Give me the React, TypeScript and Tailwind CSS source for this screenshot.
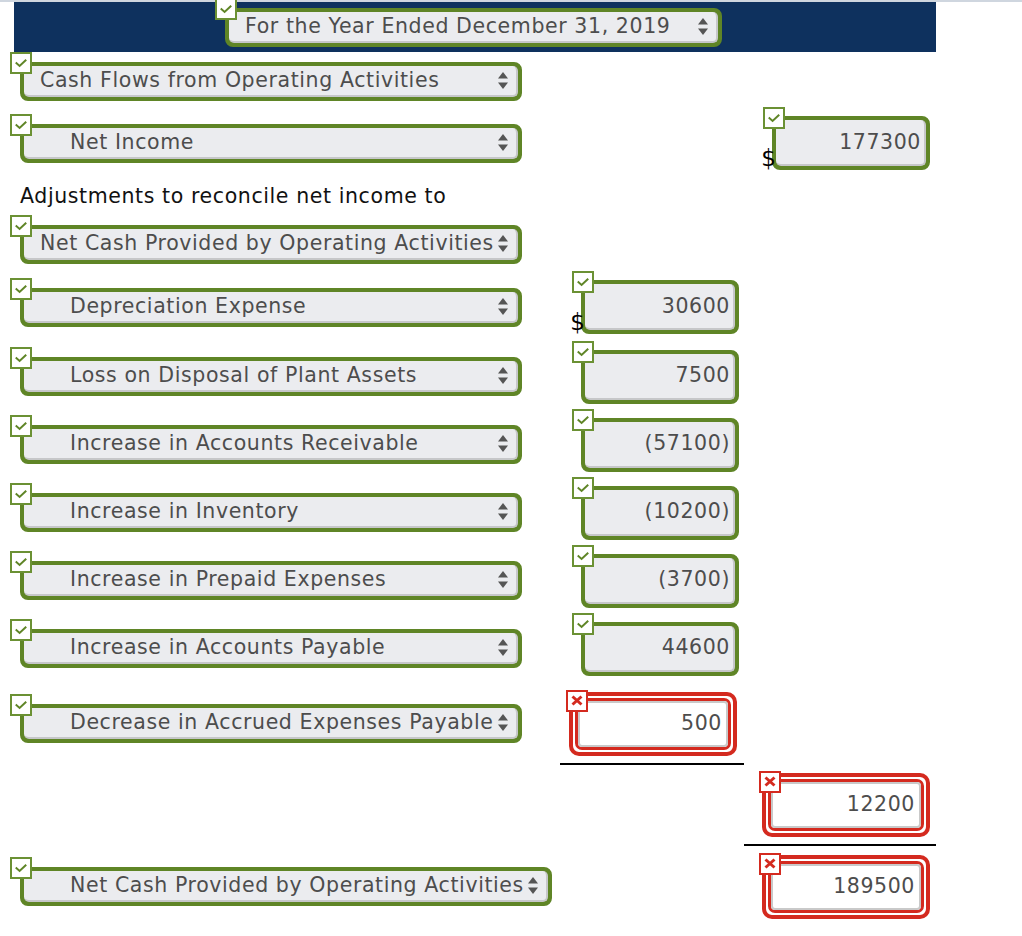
import React from "react";

function Check({ className = "-left-[14px] -top-[14px]" }: { className?: string }) {
  return (
    <div className={`absolute ${className} z-10 w-[22px] h-[22px] bg-white border-2 border-[#6b9134] flex items-start justify-center`}>
      <svg width="12" height="9" viewBox="0 0 12 9" className="mt-[5px]">
        <path d="M1.5 4.2 L4.6 7 L10.5 1.5" stroke="#5f8526" strokeWidth="2" fill="none" strokeLinecap="square" />
      </svg>
    </div>
  );
}

function Cross({ className = "-left-[7px] -top-[6px]" }: { className?: string }) {
  return (
    <div className={`absolute ${className} z-10 w-[22px] h-[22px] bg-white border-2 border-[#d42a1f] flex items-center justify-center`}>
      <svg width="12" height="11" viewBox="0 0 12 11">
        <path d="M1.5 1.5 L10.5 9.5 M10.5 1.5 L1.5 9.5" stroke="#d42a1f" strokeWidth="3" fill="none" />
      </svg>
    </div>
  );
}

function Arrows() {
  return (
    <svg width="10" height="17" viewBox="0 0 10 17" className="ml-auto shrink-0">
      <path d="M0 6.5 L5 0 L10 6.5 Z" fill="#555" />
      <path d="M0 10.5 L10 10.5 L5 17 Z" fill="#555" />
    </svg>
  );
}

function Select({ label, w, pl }: { label: string; w: string; pl: string }) {
  return (
    <div className={`relative ${w} h-[39px] rounded-[8px] border-4 border-[#5f8526] bg-[#5f8526]`}>
      <Check />
      <div className={`h-full rounded-[5px] bg-[#ebecef] border-r-2 border-b-2 border-[#c6c7c9] flex items-center ${pl} pr-[8px] text-[20.5px] tracking-[0.6px] text-[#4d4d4d] whitespace-nowrap`}>
        <span>{label}</span>
        <Arrows />
      </div>
    </div>
  );
}

function GreenBox({ value, dollar = false }: { value: string; dollar?: boolean }) {
  return (
    <div className="relative w-[158px] h-[54px] rounded-[8px] border-4 border-[#5f8526] bg-[#5f8526]">
      <Check className="-left-[13px] -top-[13px]" />
      {dollar && (
        <span className="absolute right-full bottom-[-4px] text-[23px] leading-none text-black">$</span>
      )}
      <div className="h-full rounded-[5px] bg-[#ebecef] border-r-2 border-b-2 border-[#c6c7c9] flex items-center justify-end pr-[3px] text-[20.5px] tracking-[0.6px] text-[#4d4d4d]">
        {value}
      </div>
    </div>
  );
}

function RedBox({ value }: { value: string }) {
  return (
    <div className="relative w-[168px] h-[64px] rounded-[10px] border-4 border-[#d42a1f] bg-white p-[2px]">
      <Cross />
      <div className="h-full rounded-[7px] border-[3px] border-[#d42a1f]">
        <div className="h-full rounded-[4px] border-2 border-[#c9c9c9] bg-white flex items-center justify-end pr-[4px] text-[20.5px] tracking-[0.6px] text-[#4d4d4d]">
          {value}
        </div>
      </div>
    </div>
  );
}

function Row({
  h,
  left,
  mid,
  right,
}: {
  h: string;
  left?: React.ReactNode;
  mid?: React.ReactNode;
  right?: React.ReactNode;
}) {
  return (
    <div className={`flex items-center ${h}`}>
      <div className="w-[560px] pl-[20px] flex items-center">{left}</div>
      <div className="w-[184px] flex items-center">{mid}</div>
      <div className="w-[192px] flex items-center">{right}</div>
    </div>
  );
}

export default function App() {
  return (
    <div className="w-[1022px] h-[936px] bg-white overflow-hidden font-['DejaVu_Sans',_'Verdana',_sans-serif]">
      <div className="h-[2px] bg-[#cfd6df]" />
      <div className="ml-[14px] w-[922px] h-[50px] bg-[#0e315e] pl-[211px] pt-[6px]">
        <Select label="For the Year Ended December 31, 2019" w="w-[497px]" pl="pl-[16px]" />
      </div>

      <Row h="h-[58px]" left={<Select label="Cash Flows from Operating Activities" w="w-[502px]" pl="pl-[16px]" />} />
      <Row
        h="h-[66px]"
        left={<Select label="Net Income" w="w-[502px]" pl="pl-[46px]" />}
        right={<div className="ml-[28px]"><GreenBox value="177300" dollar /></div>}
      />
      <div className="h-[40px] flex items-center pl-[20px] text-[20.5px] tracking-[0.6px] text-[#111]">
        Adjustments to reconcile net income to
      </div>
      <Row h="h-[57px]" left={<Select label="Net Cash Provided by Operating Activities" w="w-[502px]" pl="pl-[16px]" />} />
      <Row
        h="h-[68px]"
        left={<Select label="Depreciation Expense" w="w-[502px]" pl="pl-[46px]" />}
        mid={<div className="ml-[21px]"><GreenBox value="30600" dollar /></div>}
      />
      <Row
        h="h-[71px]"
        left={<Select label="Loss on Disposal of Plant Assets" w="w-[502px]" pl="pl-[46px]" />}
        mid={<div className="ml-[21px]"><GreenBox value="7500" /></div>}
      />
      <Row
        h="h-[65px]"
        left={<Select label="Increase in Accounts Receivable" w="w-[502px]" pl="pl-[46px]" />}
        mid={<div className="ml-[21px]"><GreenBox value="(57100)" /></div>}
      />
      <Row
        h="h-[71px]"
        left={<Select label="Increase in Inventory" w="w-[502px]" pl="pl-[46px]" />}
        mid={<div className="ml-[21px]"><GreenBox value="(10200)" /></div>}
      />
      <Row
        h="h-[65px]"
        left={<Select label="Increase in Prepaid Expenses" w="w-[502px]" pl="pl-[46px]" />}
        mid={<div className="ml-[21px]"><GreenBox value="(3700)" /></div>}
      />
      <Row
        h="h-[71px]"
        left={<Select label="Increase in Accounts Payable" w="w-[502px]" pl="pl-[46px]" />}
        mid={<div className="ml-[21px]"><GreenBox value="44600" /></div>}
      />
      <Row
        h="h-[79px]"
        left={<Select label="Decrease in Accrued Expenses Payable" w="w-[502px]" pl="pl-[46px]" />}
        mid={<div className="ml-[9px]"><RedBox value="500" /></div>}
      />
      <Row h="h-[2px]" mid={<div className="w-[184px] h-[2px] bg-black" />} />
      <Row h="h-[79px]" right={<div className="ml-[18px]"><RedBox value="12200" /></div>} />
      <Row h="h-[2px]" right={<div className="w-[192px] h-[2px] bg-black" />} />
      <Row
        h="h-[81px]"
        left={<Select label="Net Cash Provided by Operating Activities" w="w-[532px]" pl="pl-[46px]" />}
        right={<div className="ml-[18px]"><RedBox value="189500" /></div>}
      />
    </div>
  );
}
